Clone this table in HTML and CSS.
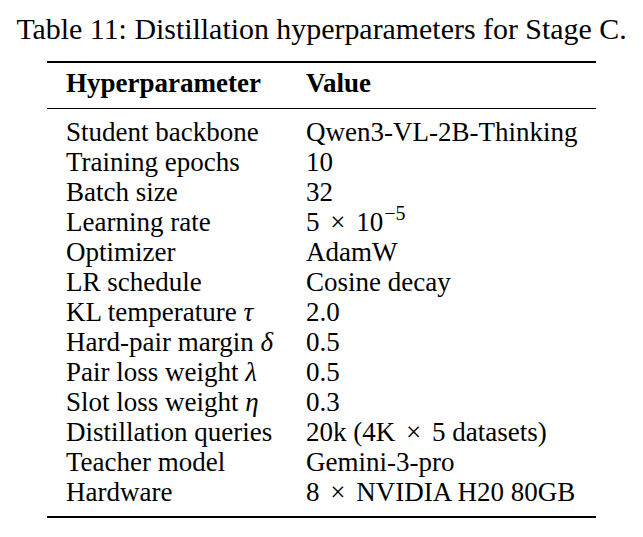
FILE: index.html
```html
<!DOCTYPE html>
<html>
<head>
<meta charset="utf-8">
<link rel="stylesheet" href="styles.css">
</head>
<body>
<div class="caption">Table 11: Distillation hyperparameters for Stage C.</div>
<div class="tbl">
  <div class="row head"><span>Hyperparameter</span><span>Value</span></div>
  <div class="body">
    <div class="row"><span>Student backbone</span><span>Qwen3-VL-2B-Thinking</span></div>
    <div class="row"><span>Training epochs</span><span>10</span></div>
    <div class="row"><span>Batch size</span><span>32</span></div>
    <div class="row"><span>Learning rate</span><span>5 <span class="x">×</span> 10<sup>−5</sup></span></div>
    <div class="row"><span>Optimizer</span><span>AdamW</span></div>
    <div class="row"><span>LR schedule</span><span>Cosine decay</span></div>
    <div class="row"><span>KL temperature <i>τ</i></span><span>2.0</span></div>
    <div class="row"><span>Hard-pair margin <i>δ</i></span><span>0.5</span></div>
    <div class="row"><span>Pair loss weight <i>λ</i></span><span>0.5</span></div>
    <div class="row"><span>Slot loss weight <i>η</i></span><span>0.3</span></div>
    <div class="row"><span>Distillation queries</span><span>20k (4K <span class="x">×</span> 5 datasets)</span></div>
    <div class="row"><span>Teacher model</span><span>Gemini-3-pro</span></div>
    <div class="row"><span>Hardware</span><span>8 <span class="x">×</span> NVIDIA H20 80GB</span></div>
  </div>
</div>
</body>
</html>
```
FILE: styles.css
```css
html, body {
  margin: 0;
  padding: 0;
  background: #fff;
  color: #000;
  font-family: "Liberation Serif", "Times New Roman", serif;
}
.caption {
  margin-top: 12px;
  font-size: 29.9px;
  line-height: 34px;
  text-align: center;
  white-space: nowrap;
}
.tbl {
  width: 549px;
  margin: 15px auto 0;
  border-top: 2px solid #000;
  border-bottom: 2px solid #000;
  font-size: 27px;
  line-height: 30px;
}
.row {
  display: grid;
  grid-template-columns: 240px 1fr;
  padding-left: 19px;
  height: 30px;
  white-space: nowrap;
}
.head {
  font-weight: bold;
  margin-top: 5px;
  padding-bottom: 10px;
  border-bottom: 1px solid #000;
}
.body {
  padding-top: 8px;
  padding-bottom: 9px;
}
.x {
  padding: 0 4px;
}
sup {
  font-size: 20px;
  line-height: 0;
  vertical-align: 11px;
  padding-left: 1px;
}
i {
  font-style: italic;
}
```
